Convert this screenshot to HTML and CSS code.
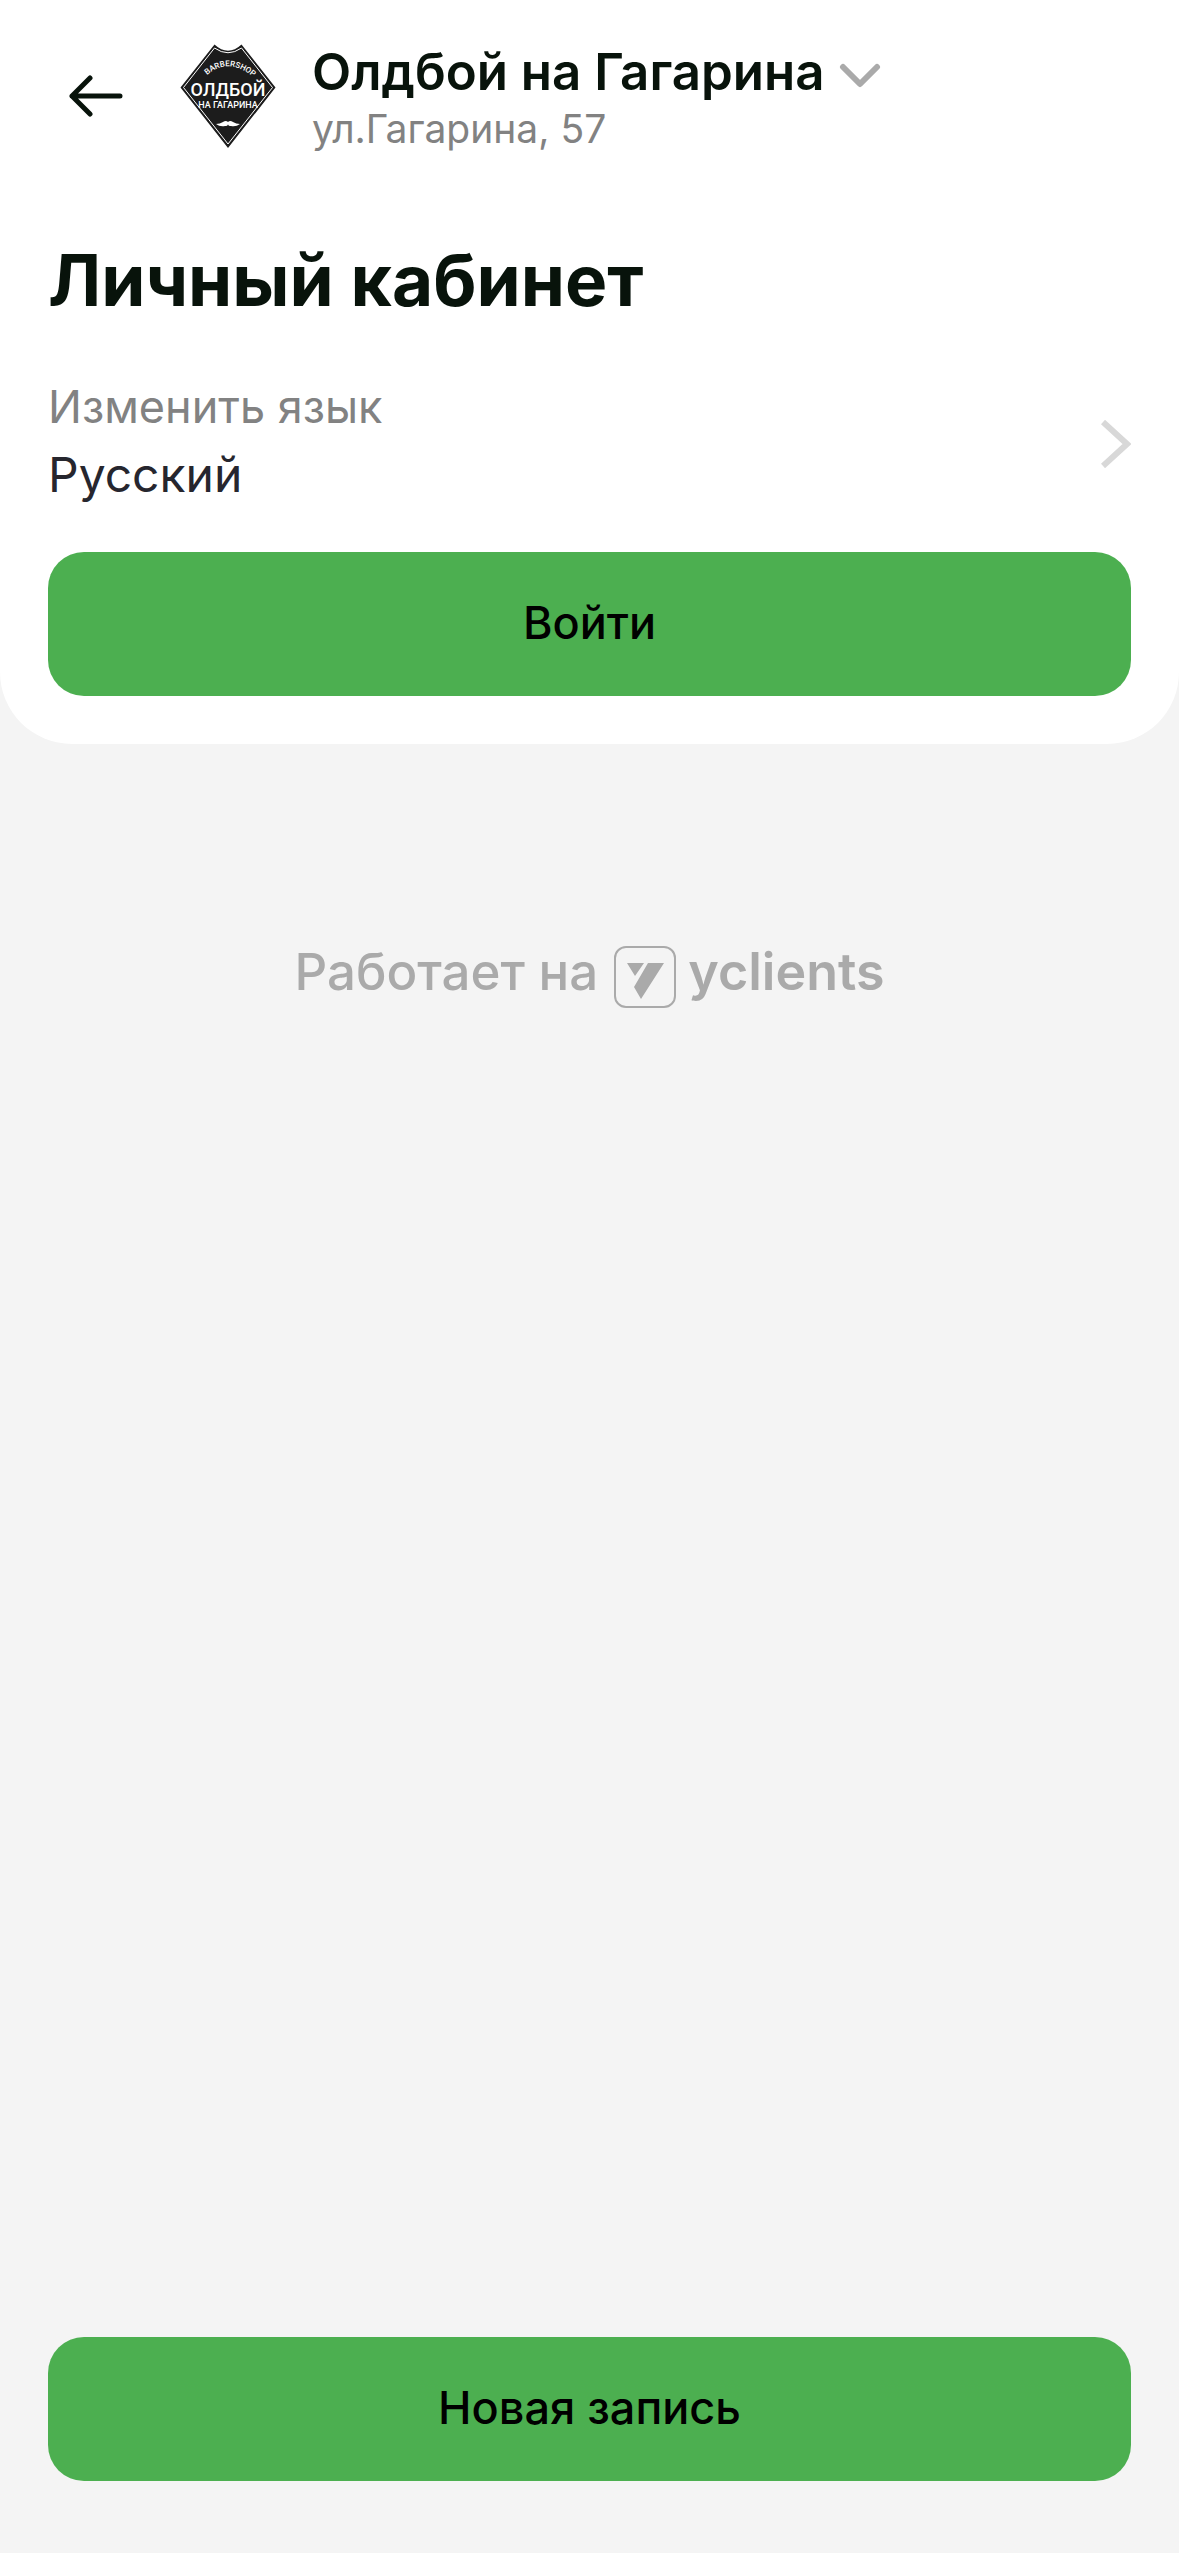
FILE: index.html
```html
<!DOCTYPE html>
<html lang="ru">
<head>
  <meta charset="utf-8">
  <meta name="viewport" content="width=device-width, initial-scale=1">
  <title>Личный кабинет</title>
  <link rel="stylesheet" href="styles.css">
</head>
<body class="page">
  <main class="card">
    <header class="header">
      <button class="back" type="button" aria-label="Назад">
        <svg class="back-icon" viewBox="0 0 54 42" aria-hidden="true">
          <path d="M51 21H3M21 3L3 21L21 39"/>
        </svg>
      </button>
      <svg class="logo" viewBox="0 0 96 104" role="img" aria-label="Олдбой на Гагарина">
        <path class="logo-shape" d="M34.500 0.500Q48 13 61.500 0.500L95.500 43.500L48 104L0.500 43.500Z"/>
        <path class="logo-line" d="M34.500 4Q48 13.500 61.500 4L92.500 43.500L48 100L3.500 43.500Z"/>
        <path id="arc" fill="none" d="M27 31Q48 13 72 32"/>
        <text class="logo-arc"><textPath href="#arc">BARBERSHOP</textPath></text>
        <text class="logo-name" x="48" y="52">ОЛДБОЙ</text>
        <text class="logo-place" x="48" y="64">НА ГАГАРИНА</text>
        <path class="logo-fill" d="M36 80Q40 80 43 78Q46 76 48 78Q50 76 53 78Q56 80 60 80Q56 83 51 82Q48 82 48 80Q48 82 45 82Q40 83 36 80Z"/>
      </svg>
      <button class="branch" type="button">
        <span class="branch-name">Олдбой на Гагарина
          <svg class="branch-icon" viewBox="0 0 42 26" aria-hidden="true"><path d="M4 4L21 21L38 4"/></svg>
        </span>
        <span class="branch-address">ул.Гагарина, 57</span>
      </button>
    </header>

    <h1 class="title">Личный кабинет</h1>

    <button class="language" type="button">
      <span class="language-text">
        <span class="language-label">Изменить язык</span>
        <span class="language-value">Русский</span>
      </span>
      <svg class="language-icon" viewBox="0 0 30 48" aria-hidden="true"><path d="M2 2L26 24L2 46"/></svg>
    </button>

    <button class="action" type="button">Войти</button>
  </main>

  <a class="powered" href="#">
    <span>Работает на</span>
    <svg class="powered-icon" viewBox="0 0 62 62" aria-hidden="true">
      <rect x="1" y="1" width="60" height="60" rx="11"/>
      <path d="M13 17H30L21 30ZM34 17H50L27 53L20 41Z"/>
    </svg>
    <span class="powered-brand">yclients</span>
  </a>

  <footer class="bottom">
    <button class="action" type="button">Новая запись</button>
  </footer>
</body>
</html>
```
FILE: styles.css
```css
* {
  box-sizing: border-box;
}

.page {
  display: flex;
  flex-direction: column;
  min-height: 100vh;
  margin: 0;
  background: #f4f4f4;
  color: #08130b;
  font-family: Inter, "Liberation Sans", sans-serif;
  font-optical-sizing: none;
}

button {
  margin: 0;
  padding: 0;
  border: 0;
  background: none;
  color: inherit;
  font: inherit;
  text-align: left;
  cursor: pointer;
}

svg {
  display: block;
  flex: none;
}

.card {
  padding: 36px 48px 48px;
  border-radius: 0 0 72px 72px;
  background: #fff;
}

.header {
  display: flex;
  align-items: center;
  gap: 36px;
}

.back {
  display: flex;
  align-items: center;
  justify-content: center;
  width: 96px;
  height: 96px;
}

.back-icon {
  width: 54px;
  height: 42px;
  fill: none;
  stroke: #08130b;
  stroke-width: 5;
  stroke-linecap: round;
  stroke-linejoin: round;
}

.logo {
  width: 96px;
  height: 104px;
}

.logo-shape {
  fill: #1c1c1c;
}

.logo-line {
  fill: none;
  stroke: #fff;
  stroke-width: 1;
}

.logo-fill,
.logo-arc,
.logo-name,
.logo-place {
  fill: #fff;
}

.logo-arc,
.logo-name,
.logo-place {
  font-family: Roboto, "Liberation Sans", sans-serif;
  font-weight: 500;
}

.logo-arc {
  font-size: 8px;
}

.logo-name,
.logo-place {
  text-anchor: middle;
}

.logo-name {
  font-size: 18px;
}

.logo-place {
  font-size: 9px;
}

.branch {
  padding-top: 6px;
}

.branch-name {
  display: flex;
  align-items: center;
  gap: 14px;
  font-size: 51px;
  font-weight: 600;
  line-height: 60px;
}

.branch-icon {
  width: 42px;
  height: 26px;
  margin-top: 8px;
  fill: none;
  stroke: #aaa;
  stroke-width: 6;
  stroke-linecap: round;
  stroke-linejoin: round;
}

.branch-address {
  display: block;
  color: #828282;
  font-size: 39px;
  line-height: 54px;
}

.title {
  margin: 82px 0 55px;
  font-size: 71px;
  font-weight: 700;
  line-height: 84px;
}

.language {
  display: flex;
  align-items: center;
  justify-content: space-between;
  width: 100%;
  margin-bottom: 40px;
  padding-bottom: 7px;
}

.language-text {
  display: flex;
  flex-direction: column;
  gap: 8px;
  line-height: 60px;
}

.language-label {
  color: #828282;
  font-size: 45px;
}

.language-value {
  color: #26262e;
  font-size: 48px;
}

.language-icon {
  width: 30px;
  height: 48px;
  margin-top: 6px;
  fill: none;
  stroke: #d8d8d8;
  stroke-width: 6;
}

.action {
  width: 100%;
  padding: 41px 42px 43px;
  border-radius: 36px;
  background: #4caf50;
  color: #000;
  font-size: 45px;
  font-weight: 500;
  line-height: 60px;
  text-align: center;
}

.powered {
  display: flex;
  justify-content: center;
  margin-top: 198px;
  color: #aaa;
  font-size: 51px;
  font-weight: 500;
  line-height: 60px;
  text-decoration: none;
}

.powered-icon {
  width: 62px;
  height: 62px;
  margin: 4px 12px 0 16px;
  fill: #aaa;
}

.powered-icon rect {
  fill: none;
  stroke: #aaa;
  stroke-width: 2;
}

.powered-brand {
  font-size: 52px;
  font-weight: 600;
}

.bottom {
  margin-top: auto;
  padding: 48px 48px 72px;
}
```
